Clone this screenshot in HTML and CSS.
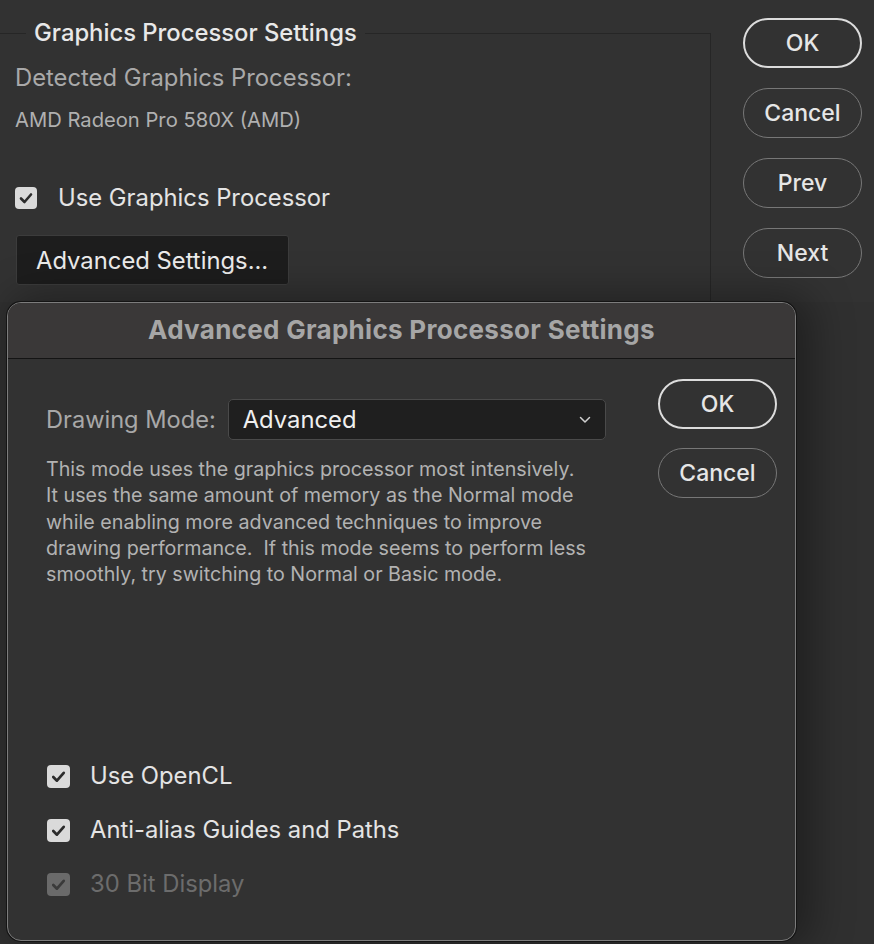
FILE: index.html
```html
<!DOCTYPE html>
<html>
<head>
<meta charset="utf-8">
<link rel="stylesheet" href="styles.css">
</head>
<body>
<div class="window">
  <fieldset class="group">
    <legend class="group-title">Graphics Processor Settings</legend>
    <div class="detected-label">Detected Graphics Processor:</div>
    <div class="gpu-name">AMD Radeon Pro 580X (AMD)</div>
    <label class="check-row main-check">
      <span class="box"><svg viewBox="0 0 22 22" width="22" height="22"><path d="M6 11.5 L9.5 15 L16 7.5" fill="none" stroke="#2c2c2c" stroke-width="2.6" stroke-linecap="round" stroke-linejoin="round"/></svg></span>
      <span class="check-text">Use Graphics Processor</span>
    </label>
    <button class="adv-btn">Advanced Settings...</button>
  </fieldset>
  <div class="side-buttons">
    <button class="pill default">OK</button>
    <button class="pill">Cancel</button>
    <button class="pill">Prev</button>
    <button class="pill">Next</button>
  </div>
</div>

<div class="modal">
  <div class="modal-title">Advanced Graphics Processor Settings</div>
  <div class="modal-body">
    <div class="modal-main">
      <div class="mode-row">
        <span class="mode-label">Drawing Mode:</span>
        <div class="select">
          <span class="select-value">Advanced</span>
          <svg class="chevron" viewBox="0 0 12 8" width="12" height="8"><path d="M1.5 1.5 L6 6 L10.5 1.5" fill="none" stroke="#d0d0d0" stroke-width="1.5" stroke-linecap="round" stroke-linejoin="round"/></svg>
        </div>
      </div>
      <p class="mode-desc">This mode uses the graphics processor most intensively.<br>It uses the same amount of memory as the Normal mode<br>while enabling more advanced techniques to improve<br>drawing performance.&nbsp; If this mode seems to perform less<br>smoothly, try switching to Normal or Basic mode.</p>
      <div class="options">
        <label class="check-row opt">
          <span class="box"><svg viewBox="0 0 22 22" width="23" height="23"><path d="M6 11.5 L9.5 15 L16 7.5" fill="none" stroke="#2c2c2c" stroke-width="2.6" stroke-linecap="round" stroke-linejoin="round"/></svg></span>
          <span class="check-text">Use OpenCL</span>
        </label>
        <label class="check-row opt">
          <span class="box"><svg viewBox="0 0 22 22" width="23" height="23"><path d="M6 11.5 L9.5 15 L16 7.5" fill="none" stroke="#2c2c2c" stroke-width="2.6" stroke-linecap="round" stroke-linejoin="round"/></svg></span>
          <span class="check-text">Anti-alias Guides and Paths</span>
        </label>
        <label class="check-row opt disabled">
          <span class="box"><svg viewBox="0 0 22 22" width="23" height="23"><path d="M6 11.5 L9.5 15 L16 7.5" fill="none" stroke="#3a3a3a" stroke-width="2.6" stroke-linecap="round" stroke-linejoin="round"/></svg></span>
          <span class="check-text">30 Bit Display</span>
        </label>
      </div>
    </div>
    <div class="modal-buttons">
      <button class="pill default">OK</button>
      <button class="pill">Cancel</button>
    </div>
  </div>
</div>
</body>
</html>
```

FILE: styles.css
```css
* { box-sizing: border-box; }

html, body {
  margin: 0;
  padding: 0;
}

body {
  width: 874px;
  height: 944px;
  background: #303030;
  font-family: Inter, "Noto Sans", "Liberation Sans", sans-serif;
  color: #e4e4e4;
  overflow: hidden;
  position: relative;
}

.window {
  display: flex;
  align-items: flex-start;
  height: 302px;
  background: #323232;
}

.group {
  margin: 20px 0 0 0;
  padding: 0 0 0 15px;
  width: 711px;
  height: 282px;
  border: none;
  border-top: 1px solid #262626;
  border-right: 1px solid #262626;
  min-width: 0;
}

.group-title {
  margin-left: 11px;
  padding: 0 8px;
  font-size: 23.8px;
  font-weight: 500;
  color: #e8e8e8;
  line-height: 26px;
}

.detected-label {
  margin-top: 19px;
  font-size: 23.8px;
  line-height: 26px;
  color: #a9a9a9;
}

.gpu-name {
  margin-top: 17px;
  font-size: 20.2px;
  line-height: 24px;
  color: #b0b0b0;
}

.check-row {
  display: flex;
  align-items: center;
}

.box {
  display: flex;
  align-items: center;
  justify-content: center;
  background: #dadada;
  border-radius: 4px;
}

.main-check {
  margin-top: 53px;
  gap: 21px;
}

.main-check .box {
  width: 22px;
  height: 22px;
}

.check-text {
  font-size: 23.8px;
  line-height: 26px;
  color: #e4e4e4;
}

.adv-btn {
  display: block;
  margin-top: 24px;
  margin-left: 1px;
  width: 273px;
  height: 50px;
  padding: 0 0 0 19px;
  text-align: left;
  background: #1d1d1d;
  border: 1px solid #3c3c3c;
  border-radius: 3px;
  font-family: inherit;
  font-size: 23.8px;
  color: #ececec;
}

.side-buttons {
  display: flex;
  flex-direction: column;
  gap: 20px;
  margin-left: 32px;
  margin-top: 18px;
}

.pill {
  width: 119px;
  height: 50px;
  border-radius: 25px;
  background: transparent;
  border: 1.5px solid #777;
  color: #e6e6e6;
  font-family: inherit;
  font-size: 23px;
  font-weight: 500;
  padding: 0;
}

.pill.default {
  border: 2px solid #dcdcdc;
}

/* Modal dialog overlay */
.modal {
  position: absolute;
  left: 7px;
  top: 302px;
  width: 789px;
  height: 639px;
  display: flex;
  flex-direction: column;
  background: #323232;
  border: 1.5px solid #7c7c7c;
  border-radius: 14px;
  box-shadow: 0 0 0 1px #141414, 10px 0 40px 6px rgba(0, 0, 0, 0.35);
  overflow: hidden;
}

.modal-title {
  height: 56px;
  flex: none;
  background: #3a3838;
  border-bottom: 1px solid #141414;
  text-align: center;
  font-size: 26px;
  font-weight: 700;
  color: #a6a6a6;
  line-height: 54px;
  letter-spacing: 0.3px;
}

.modal-body {
  flex: 1;
  display: flex;
  justify-content: space-between;
  padding: 0 18px 44px 38px;
}

.modal-main {
  display: flex;
  flex-direction: column;
}

.mode-row {
  display: flex;
  align-items: center;
  gap: 12px;
  margin-top: 40px;
}

.mode-label {
  font-size: 23.6px;
  color: #a8a8a8;
}

.select {
  width: 378px;
  height: 41px;
  display: flex;
  align-items: center;
  justify-content: space-between;
  padding: 0 14px 0 14px;
  background: #1f1f1f;
  border: 1px solid #4a4a4a;
  border-radius: 5px;
}

.select-value {
  font-size: 23.8px;
  color: #efefef;
}

.mode-desc {
  margin: 16px 0 0 0;
  font-size: 19.7px;
  line-height: 26.3px;
  color: #b2b2b2;
}

.options {
  margin-top: auto;
  display: flex;
  flex-direction: column;
  gap: 30px;
}

.opt {
  gap: 20px;
  margin-left: 1px;
}

.opt .box {
  width: 23px;
  height: 23px;
}

.opt .check-text {
  line-height: 24px;
}

.opt.disabled .box {
  background: #6a6a6a;
}

.opt.disabled .check-text {
  color: #6c6c6c;
}

.modal-buttons {
  display: flex;
  flex-direction: column;
  gap: 19px;
  margin-top: 20px;
}
```
